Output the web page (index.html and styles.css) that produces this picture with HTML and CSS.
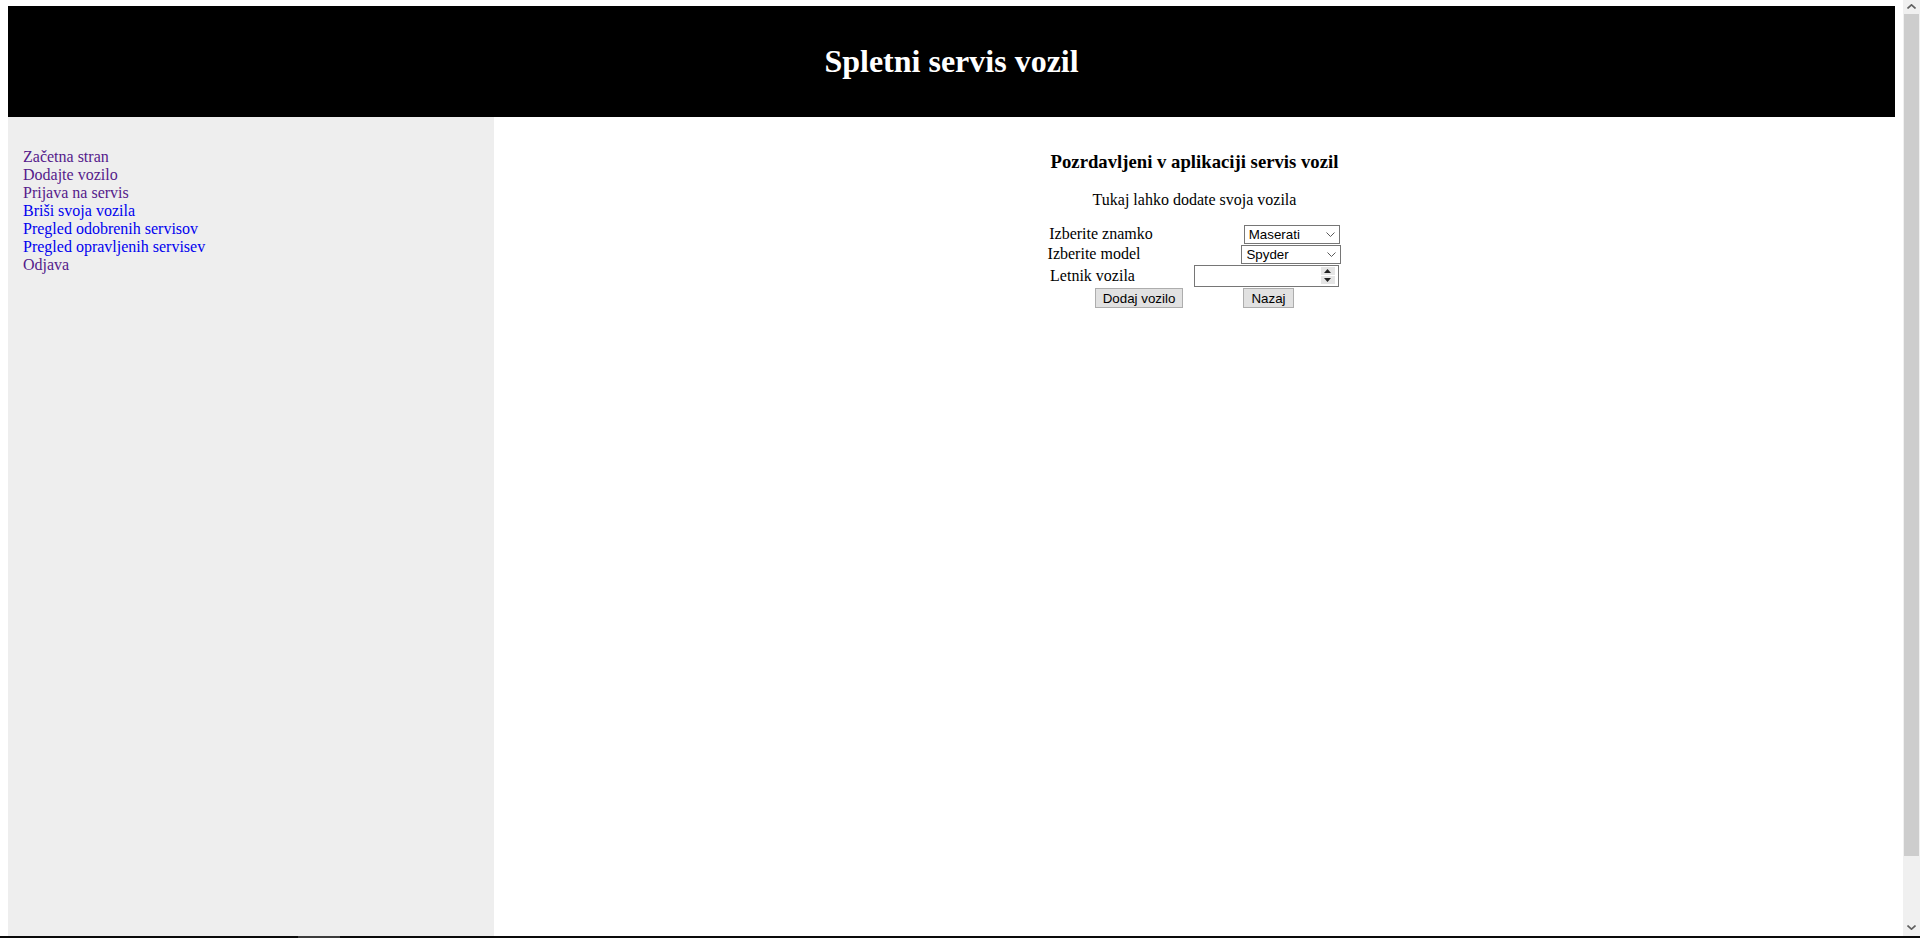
FILE: index.html
```html
<!DOCTYPE html>
<html lang="sl">
<head>
<meta charset="utf-8">
<title>Spletni servis vozil</title>
<link rel="stylesheet" href="styles.css">
</head>
<body>
<header class="site-header">
  <h1 class="site-title">Spletni servis vozil</h1>
</header>
<div class="layout">
  <nav class="sidebar">
    <ul class="nav-list">
      <li><a class="nav-link nav-visited" href="#">Začetna stran</a></li>
      <li><a class="nav-link nav-visited" href="#">Dodajte vozilo</a></li>
      <li><a class="nav-link nav-visited" href="#">Prijava na servis</a></li>
      <li><a class="nav-link" href="#">Briši svoja vozila</a></li>
      <li><a class="nav-link" href="#">Pregled odobrenih servisov</a></li>
      <li><a class="nav-link" href="#">Pregled opravljenih servisev</a></li>
      <li><a class="nav-link nav-visited" href="#">Odjava</a></li>
    </ul>
  </nav>
  <main class="content">
    <h3 class="welcome">Pozrdavljeni v aplikaciji servis vozil</h3>
    <p class="intro">Tukaj lahko dodate svoja vozila</p>
    <form class="vehicle-form">
      <div class="form-row row-brand">
        <label class="form-label" for="znamka">Izberite znamko</label>
        <span class="select-wrap">
          <select class="control select select-brand" id="znamka"><option>Maserati</option></select>
          <svg class="select-arrow" width="9" height="5" viewBox="0 0 9 5"><polyline points="0.5,0.5 4.5,4.5 8.5,0.5" fill="none" stroke="#5a5a5a" stroke-width="1"/></svg>
        </span>
      </div>
      <div class="form-row row-model">
        <label class="form-label" for="model">Izberite model</label>
        <span class="select-wrap">
          <select class="control select select-model" id="model"><option>Spyder</option></select>
          <svg class="select-arrow" width="9" height="5" viewBox="0 0 9 5"><polyline points="0.5,0.5 4.5,4.5 8.5,0.5" fill="none" stroke="#5a5a5a" stroke-width="1"/></svg>
        </span>
      </div>
      <div class="form-row row-year">
        <label class="form-label" for="letnik">Letnik vozila</label>
        <span class="number-wrap">
          <input class="control year-input" id="letnik" type="number">
          <span class="spinner">
            <span class="spin-btn"><svg width="7" height="4" viewBox="0 0 7 4"><polygon points="3.5,0 7,4 0,4" fill="#222"/></svg></span>
            <span class="spin-btn"><svg width="7" height="4" viewBox="0 0 7 4"><polygon points="0,0 7,0 3.5,4" fill="#222"/></svg></span>
          </span>
        </span>
      </div>
      <div class="form-row row-actions">
        <button class="control btn btn-add" type="button">Dodaj vozilo</button>
        <button class="control btn btn-back" type="button">Nazaj</button>
      </div>
    </form>
  </main>
</div>
<aside class="scrollbar" aria-hidden="true">
  <div class="scroll-btn scroll-up"><svg width="9" height="5" viewBox="0 0 9 5"><polyline points="0.5,4.5 4.5,0.8 8.5,4.5" fill="none" stroke="#606060" stroke-width="1.6"/></svg></div>
  <div class="scroll-track"><div class="scroll-thumb"></div></div>
  <div class="scroll-btn scroll-down"><svg width="9" height="5" viewBox="0 0 9 5"><polyline points="0.5,0.5 4.5,4.2 8.5,0.5" fill="none" stroke="#606060" stroke-width="1.6"/></svg></div>
</aside>
<div class="screen-edge"><span class="screen-edge-mark"></span></div>
</body>
</html>
```

FILE: styles.css
```css
body {
  margin: 6px 25px 8px 8px;
  font-family: "Liberation Serif", "Times New Roman", serif;
  font-size: 16px;
  color: #000;
  background: #fff;
}

.site-header {
  background: #000;
  color: #fff;
  padding: 16px;
  text-align: center;
}

.site-title {
  margin: 21px 0;
  font-size: 32px;
  line-height: 37px;
  font-weight: bold;
}

.layout {
  display: flex;
  min-height: 1700px;
}

.sidebar {
  width: 486px;
  flex-shrink: 0;
  box-sizing: border-box;
  background: #eeeeee;
  padding: 15px;
}

.nav-list {
  list-style: none;
  margin: 16px 0;
  padding: 0;
}

.nav-link {
  color: #0000ee;
  text-decoration: none;
}

.nav-visited {
  color: #551a8b;
}

.content {
  flex: 1;
  padding: 15px;
  text-align: center;
}

.welcome {
  font-size: 18.72px;
  margin: 18.72px 0;
  font-weight: bold;
}

.intro {
  margin: 16px 0;
}

.vehicle-form {
  display: flex;
  flex-direction: column;
}

.form-row {
  display: flex;
  justify-content: center;
  align-items: baseline;
}

.row-brand { gap: 91px; }
.row-model { gap: 101px; margin-top: 1px; }
.row-year { gap: 59px; margin-top: 1px; }
.row-actions { gap: 60px; margin-top: 1px; }

.control {
  font-family: "Liberation Sans", Arial, sans-serif;
  font-size: 13.333px;
  box-sizing: border-box;
  margin: 0;
  color: #000;
}

.select-wrap,
.number-wrap {
  position: relative;
  display: inline-flex;
}

.select {
  -webkit-appearance: none;
  appearance: none;
  height: 19px;
  border: 1px solid #767676;
  border-radius: 0;
  background: #fff;
  padding: 0 0 0 4px;
}

.select-brand { width: 96px; }
.select-model { width: 100px; }

.select-arrow {
  position: absolute;
  right: 5px;
  top: 7px;
  pointer-events: none;
}

.year-input {
  width: 145px;
  height: 22px;
  border: 1px solid #767676;
  border-radius: 0;
  padding: 1px 2px;
  background: #fff;
}

.year-input::-webkit-inner-spin-button,
.year-input::-webkit-outer-spin-button {
  -webkit-appearance: none;
  margin: 0;
}

.spinner {
  position: absolute;
  right: 4px;
  top: 2px;
  width: 14px;
  height: 17px;
  display: flex;
  flex-direction: column;
  gap: 1px;
  background: #fff;
}

.spin-btn {
  flex: 1;
  display: flex;
  align-items: center;
  justify-content: center;
  background: #e5e5e5;
}

.btn {
  height: 20px;
  background: #e1e1e1;
  border: 1px solid #adadad;
  border-radius: 0;
  padding: 1px 6px;
}

.btn-add { width: 88px; }
.btn-back { width: 51px; }

.scrollbar {
  position: fixed;
  top: 0;
  right: 0;
  bottom: 0;
  width: 17px;
  background: #f0f0f0;
  display: flex;
  flex-direction: column;
}

.scroll-btn {
  display: flex;
  justify-content: center;
  align-items: flex-start;
  box-sizing: border-box;
}

.scroll-up {
  height: 14px;
  padding-top: 4px;
}

.scroll-down {
  height: 19px;
  padding-top: 6px;
}

.scroll-track {
  flex: 1;
}

.scroll-thumb {
  height: 842px;
  margin: 0 1px;
  background: #cdcdcd;
}

.screen-edge {
  position: fixed;
  left: 0;
  right: 0;
  bottom: 0;
  height: 2px;
  background: #0a0a0a;
  z-index: 2;
}

.screen-edge-mark {
  display: block;
  margin-left: 298px;
  width: 42px;
  height: 2px;
  background: #3c3c3c;
}
```
